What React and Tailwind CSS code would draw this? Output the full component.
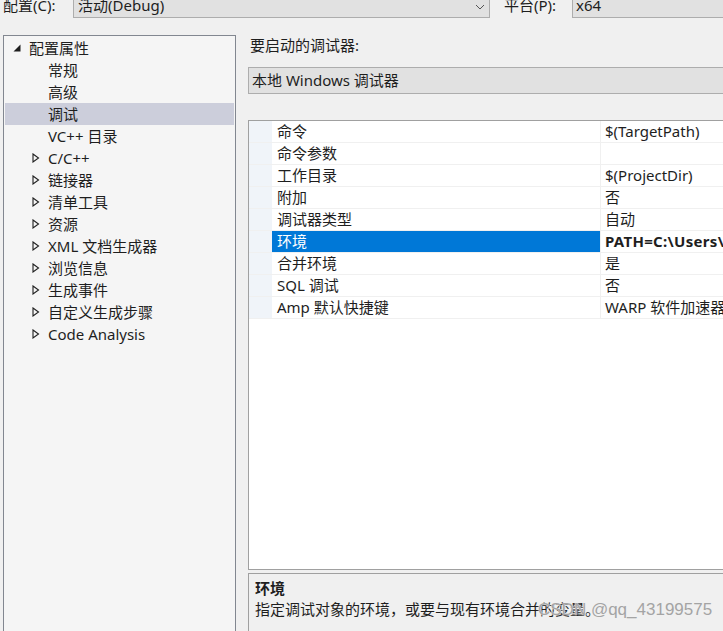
import React from "react";

const font = "font-['Noto_Sans','Noto_Sans_CJK_SC',sans-serif]";

function Expanded() {
  return (
    <svg width="8" height="8" viewBox="0 0 8 8" className="shrink-0">
      <polygon points="0.5,7.5 7.5,0.5 7.5,7.5" fill="#1e1e1e" />
    </svg>
  );
}

function Collapsed() {
  return (
    <svg width="8" height="10" viewBox="0 0 8 10" className="shrink-0">
      <polygon points="1,1 6.5,5 1,9" fill="none" stroke="#1e1e1e" strokeWidth="1.1" />
    </svg>
  );
}

const tree = [
  { t: "配置属性", lvl: 0, exp: true },
  { t: "常规", lvl: 1 },
  { t: "高级", lvl: 1 },
  { t: "调试", lvl: 1, sel: true },
  { t: "VC++ 目录", lvl: 1 },
  { t: "C/C++", lvl: 1, col: true },
  { t: "链接器", lvl: 1, col: true },
  { t: "清单工具", lvl: 1, col: true },
  { t: "资源", lvl: 1, col: true },
  { t: "XML 文档生成器", lvl: 1, col: true },
  { t: "浏览信息", lvl: 1, col: true },
  { t: "生成事件", lvl: 1, col: true },
  { t: "自定义生成步骤", lvl: 1, col: true },
  { t: "Code Analysis", lvl: 1, col: true },
];

const rows = [
  ["命令", "$(TargetPath)"],
  ["命令参数", ""],
  ["工作目录", "$(ProjectDir)"],
  ["附加", "否"],
  ["调试器类型", "自动"],
  ["环境", "PATH=C:\\Users\\", true],
  ["合并环境", "是"],
  ["SQL 调试", "否"],
  ["Amp 默认快捷键", "WARP 软件加速器"],
];

export default function App() {
  return (
    <div className={`relative w-[723px] h-[631px] overflow-hidden bg-[#f0f0f0] text-[15px] text-[#1e1e1e] ${font}`}>
      {/* top bar */}
      <div className="flex items-center h-[26px] -mt-[8px] whitespace-nowrap">
        <div className="w-[73px] shrink-0 pl-[3px] pt-[1px]">配置(C):</div>
        <div className="w-[417px] shrink-0 h-[26px] border border-[#adadad] bg-[#e1e1e1] flex items-center pl-[4px] pt-[1px] justify-between">
          <span>活动(Debug)</span>
          <svg width="10" height="6" viewBox="0 0 10 6" className="mr-[4px] mt-[3px]">
            <polyline points="1,1 5,5 9,1" fill="none" stroke="#555" strokeWidth="1" />
          </svg>
        </div>
        <div className="w-[82px] shrink-0 pl-[14px] pt-[1px]">平台(P):</div>
        <div className="w-[200px] shrink-0 h-[26px] border border-[#adadad] bg-[#e1e1e1] flex items-center pl-[3px] pt-[1px]">
          x64
        </div>
      </div>

      <div className="flex mt-[17px]">
        {/* tree */}
        <div className="ml-[3px] w-[233px] h-[620px] border border-[#828790] bg-[#f5f5f5] pt-[1px] pl-[1px] pr-[1px] shrink-0">
          {tree.map((r, i) => (
            <div
              key={i}
              className={`flex items-center h-[22px] whitespace-nowrap ${r.sel ? "bg-[#cccedb]" : ""}`}
            >
              {r.lvl === 0 ? (
                <>
                  <div className="w-[24px] flex justify-start pl-[8px] pb-[1px]">
                    <Expanded />
                  </div>
                  <span>{r.t}</span>
                </>
              ) : (
                <>
                  <div className="w-[43px] flex justify-end pr-[8px]">{r.col ? <Collapsed /> : null}</div>
                  <span>{r.t}</span>
                </>
              )}
            </div>
          ))}
        </div>

        {/* right */}
        <div className="ml-[12px] w-[540px] flex flex-col shrink-0">
          <div className="h-[20px] leading-[20px] pl-[2px]">要启动的调试器:</div>
          <div className="mt-[12px] h-[27px] border border-[#adadad] bg-[#e1e1e1] flex items-center pl-[3px]">
            本地 Windows 调试器
          </div>
          <div className="mt-[26px] h-[450px] border border-[#a0a0a0] bg-white flex flex-col">
            {rows.map(([n, v, sel], i) => (
              <div key={i} className="flex h-[22px] border-b border-[#f0f0f0] whitespace-nowrap">
                <div className="w-[23px] bg-[#f0f4f9] shrink-0" />
                <div
                  className={`w-[329px] shrink-0 pl-[5px] flex items-center border-r border-[#f0f0f0] ${
                    sel ? "bg-[#0078d7] text-white" : ""
                  }`}
                >
                  {n}
                </div>
                <div className={`flex-1 pl-[4px] flex items-center ${sel ? "font-bold tracking-[0.3px]" : ""}`}>{v}</div>
              </div>
            ))}
          </div>
          <div className="mt-[3px] h-[70px] border border-[#a0a0a0] bg-[#f0f0f0] pl-[6px] pt-[4px]">
            <div className="h-[20px] leading-[20px] font-bold">环境</div>
            <div className="h-[22px] leading-[22px] whitespace-nowrap">指定调试对象的环境，或要与现有环境合并的变量。</div>
          </div>
        </div>
      </div>

      <div className="absolute left-[538px] top-[600px] text-[17px] leading-[20px] text-[#a4a4a4] font-['Liberation_Sans',sans-serif] whitespace-nowrap [text-shadow:0_0_2px_#f0f0f0,0_0_1px_#f0f0f0]">
        CSDN @qq_43199575
      </div>
    </div>
  );
}
